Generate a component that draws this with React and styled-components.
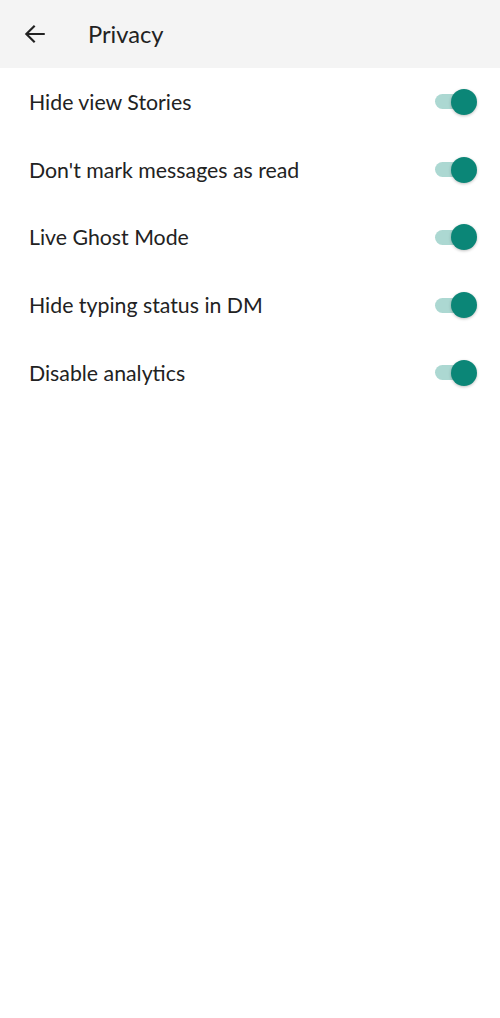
import React, { useState } from "react";
import styled, { createGlobalStyle } from "styled-components";

const Global = createGlobalStyle`
  html, body { margin: 0; padding: 0; background: #ffffff; }
  body { font-family: "Lato", "Noto Sans", sans-serif; }
`;

const Page = styled.div`
  width: 500px;
  min-height: 1018px;
  background: #ffffff;
  display: flex;
  flex-direction: column;
`;

const TopBar = styled.header`
  height: 68px;
  background: #f4f4f4;
  display: flex;
  align-items: center;
  padding-left: 21px;
  box-sizing: border-box;
`;

const BackButton = styled.button`
  width: 27px;
  height: 27px;
  padding: 0;
  border: none;
  background: none;
  display: flex;
  align-items: center;
  justify-content: center;
  color: #222222;
`;

const Title = styled.h1`
  margin: 0 0 0 40px;
  font-size: 23.7px;
  font-weight: 400;
  color: #222222;
`;

const List = styled.div`
  display: flex;
  flex-direction: column;
`;

const Row = styled.label`
  height: 67.75px;
  display: flex;
  align-items: center;
  justify-content: space-between;
  padding: 0 23px 0 29px;
  box-sizing: border-box;
`;

const Label = styled.span`
  font-size: 21.3px;
  color: #222222;
`;

const Track = styled.span`
  position: relative;
  width: 37px;
  height: 15px;
  border-radius: 8px;
  background: ${(p) => (p.$on ? "#acd8d2" : "#bdbdbd")};
  margin-right: 5px;
`;

const Thumb = styled.span`
  position: absolute;
  top: 50%;
  left: ${(p) => (p.$on ? "16px" : "-4px")};
  width: 26px;
  height: 26px;
  margin-top: -13px;
  border-radius: 50%;
  background: ${(p) => (p.$on ? "#0b8677" : "#f1f1f1")};
  box-shadow: 0 1px 3px rgba(0, 0, 0, 0.25);
`;

const Switch = ({ on, onClick }) => (
  <Track $on={on} onClick={onClick}>
    <Thumb $on={on} />
  </Track>
);

const items = [
  "Hide view Stories",
  "Don't mark messages as read",
  "Live Ghost Mode",
  "Hide typing status in DM",
  "Disable analytics",
];

export default function App() {
  const [state, setState] = useState(items.map(() => true));
  return (
    <Page>
      <Global />
      <TopBar>
        <BackButton aria-label="Back">
          <svg width="26" height="26" viewBox="0 0 24 24" fill="none" stroke="#222" strokeWidth="2" strokeLinecap="square">
            <path d="M20 12H5M11 5l-7 7 7 7" />
          </svg>
        </BackButton>
        <Title>Privacy</Title>
      </TopBar>
      <List>
        {items.map((t, i) => (
          <Row key={t}>
            <Label>{t}</Label>
            <Switch
              on={state[i]}
              onClick={() => setState((s) => s.map((v, j) => (j === i ? !v : v)))}
            />
          </Row>
        ))}
      </List>
    </Page>
  );
}
